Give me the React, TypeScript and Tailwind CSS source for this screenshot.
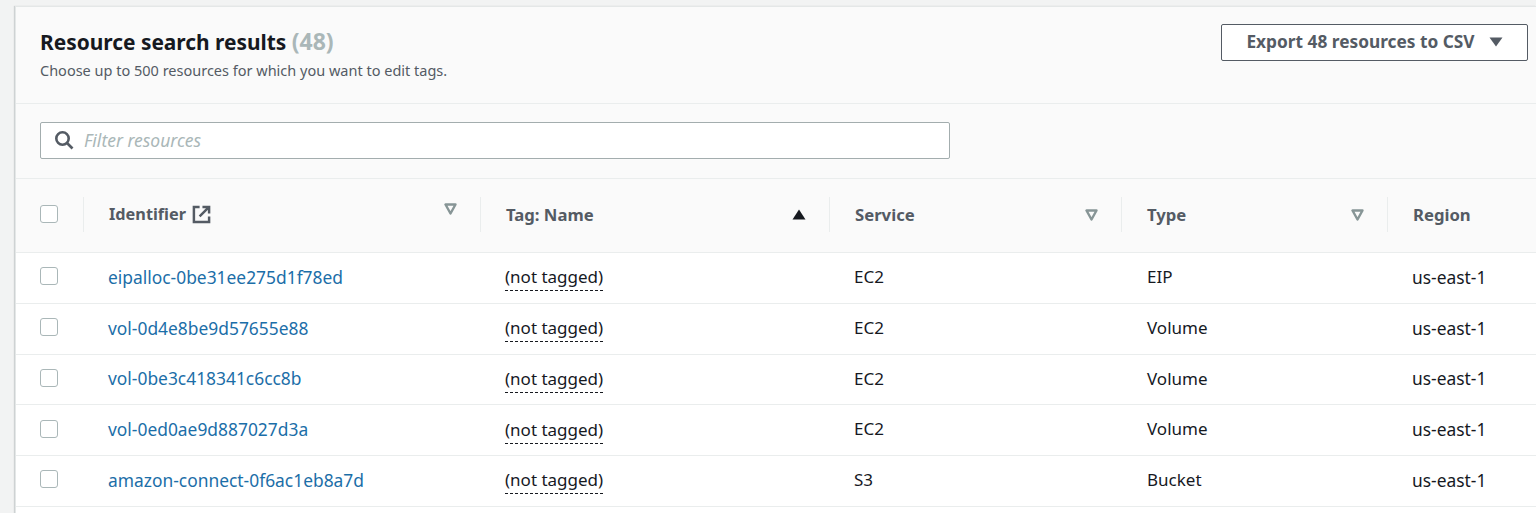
const rows = [
  { id: 'eipalloc-0be31ee275d1f78ed', service: 'EC2', type: 'EIP' },
  { id: 'vol-0d4e8be9d57655e88', service: 'EC2', type: 'Volume' },
  { id: 'vol-0be3c418341c6cc8b', service: 'EC2', type: 'Volume' },
  { id: 'vol-0ed0ae9d887027d3a', service: 'EC2', type: 'Volume' },
  { id: 'amazon-connect-0f6ac1eb8a7d', service: 'S3', type: 'Bucket' },
]

function Checkbox() {
  return <div className="w-[18px] h-[18px] bg-white border border-[#aab7b8] rounded-[3px]" />
}

function FilterIcon({ className = '' }: { className?: string }) {
  return (
    <svg width="13" height="12" viewBox="0 0 13 12" className={className}>
      <path d="M1.5 1.5h10L6.5 10.5z" fill="none" stroke="#879596" strokeWidth="2.4" strokeLinejoin="round" />
    </svg>
  )
}

function HeaderCell({ label, children, last }: { label: React.ReactNode; children?: React.ReactNode; last?: boolean }) {
  return (
    <div className="relative h-full flex items-center pl-[25px] pr-[32px] pb-[2px] justify-between">
      <div className={last ? 'hidden' : 'absolute right-0 top-[18px] bottom-[20px] w-px bg-[#eaeded]'} />
      <div className="font-bold text-[#545b64] flex items-center gap-[6px] text-[16.7px]">{label}</div>
      {children}
    </div>
  )
}

export default function App() {
  return (
    <div className="h-[513px] overflow-hidden bg-[#f2f3f3] pl-[15px] pt-[6px] font-['Noto_Sans',sans-serif] text-[17px] text-[#16191f]">
      <div className="w-[1521px] border-l border-t border-[#e4e7e7] bg-[#fafafa] shadow-[-1px_0_1px_rgba(0,28,36,0.15)]">
        {/* header */}
        <div className="h-[97px] border-b border-[#eaeded] flex justify-between pl-[24px] pr-[8px] pt-[18px]">
          <div>
            <h2 className="text-[20.9px] leading-[35px] font-bold">
              Resource search results <span className="font-bold text-[#aab7b8] text-[23px] leading-none">(48)</span>
            </h2>
            <p className="text-[14.5px] leading-[20px] text-[#545b64] mt-0">
              Choose up to 500 resources for which you want to edit tags.
            </p>
          </div>
          <button className="h-[37px] -mt-px w-[307px] bg-white border border-[#545b64] rounded-[2px] flex items-center justify-center gap-[14px] pb-[2px] font-bold text-[#545b64] text-[17.3px]">
            Export 48 resources to CSV
            <svg width="14" height="10" viewBox="0 0 14 10">
              <path d="M0.5 0.5h13L7 9.5z" fill="#545b64" />
            </svg>
          </button>
        </div>

        {/* filter */}
        <div className="h-[75px] border-b border-[#eaeded] pl-[24px] pt-[18px]">
          <div className="w-[910px] h-[37px] bg-white border border-[#a3adae] rounded-[2px] flex items-center pl-[13px] gap-[10px] pb-[1px]">
            <svg width="20" height="20" viewBox="0 0 20 20" fill="none" stroke="#545b64" strokeWidth="2.6">
              <circle cx="8.5" cy="8.5" r="6.2" />
              <path d="m13 13 5.5 5.5" />
            </svg>
            <span className="italic text-[#aab7b8] text-[17.5px]">Filter resources</span>
          </div>
        </div>

        {/* table head */}
        <div className="h-[74px] grid grid-cols-[68px_397px_349px_292px_266px_1fr] border-b border-[#eaeded] bg-[#fafafa]">
          <div className="relative flex items-center pl-[24px] pb-[4px]">
            <Checkbox />
            <div className="absolute right-0 top-[18px] bottom-[20px] w-px bg-[#eaeded]" />
          </div>
          <HeaderCell
            label={
              <>
                <span className="text-[16.3px]">Identifier</span>
                <svg width="19" height="19" viewBox="0 0 20 20" fill="none" stroke="#545b64" strokeWidth="2.6">
                  <path d="M8 2H2v16h16v-6" />
                  <path d="M11 2h7v7M18 2 8 12" />
                </svg>
              </>
            }
          >
            <FilterIcon className="mb-[12px] -mr-[8px]" />
          </HeaderCell>
          <HeaderCell label="Tag: Name">
            <svg width="14" height="11" viewBox="0 0 14 11" className="-mr-[8px]">
              <path d="M7 0.5 13.5 10.5H0.5z" fill="#16191f" />
            </svg>
          </HeaderCell>
          <HeaderCell label="Service">
            <FilterIcon className="-mr-[8px]" />
          </HeaderCell>
          <HeaderCell label="Type">
            <FilterIcon className="-mr-[8px]" />
          </HeaderCell>
          <HeaderCell label="Region" last />
        </div>

        {/* rows */}
        <div className="bg-white">
          {rows.map((row) => (
            <div
              key={row.id}
              className="h-[50.75px] grid grid-cols-[68px_397px_349px_292px_266px_1fr] items-center border-b border-[#eaeded]"
            >
              <div className="pl-[24px] pb-[3px]">
                <Checkbox />
              </div>
              <a className="pl-[24px] pb-[2px] text-[#1b6ea8] text-[17.4px]">{row.id}</a>
              <div className="pl-[24px]">
                <span className="border-b border-dashed border-[#16191f] leading-[23px] pb-[2px] inline-block">(not tagged)</span>
              </div>
              <div className="pl-[24px] pb-[2px]">{row.service}</div>
              <div className="pl-[25px] pb-[2px]">{row.type}</div>
              <div className="pl-[24px] pb-[2px] text-[17.4px]">us-east-1</div>
            </div>
          ))}
          <div className="h-[10px]" />
        </div>
      </div>
    </div>
  )
}
